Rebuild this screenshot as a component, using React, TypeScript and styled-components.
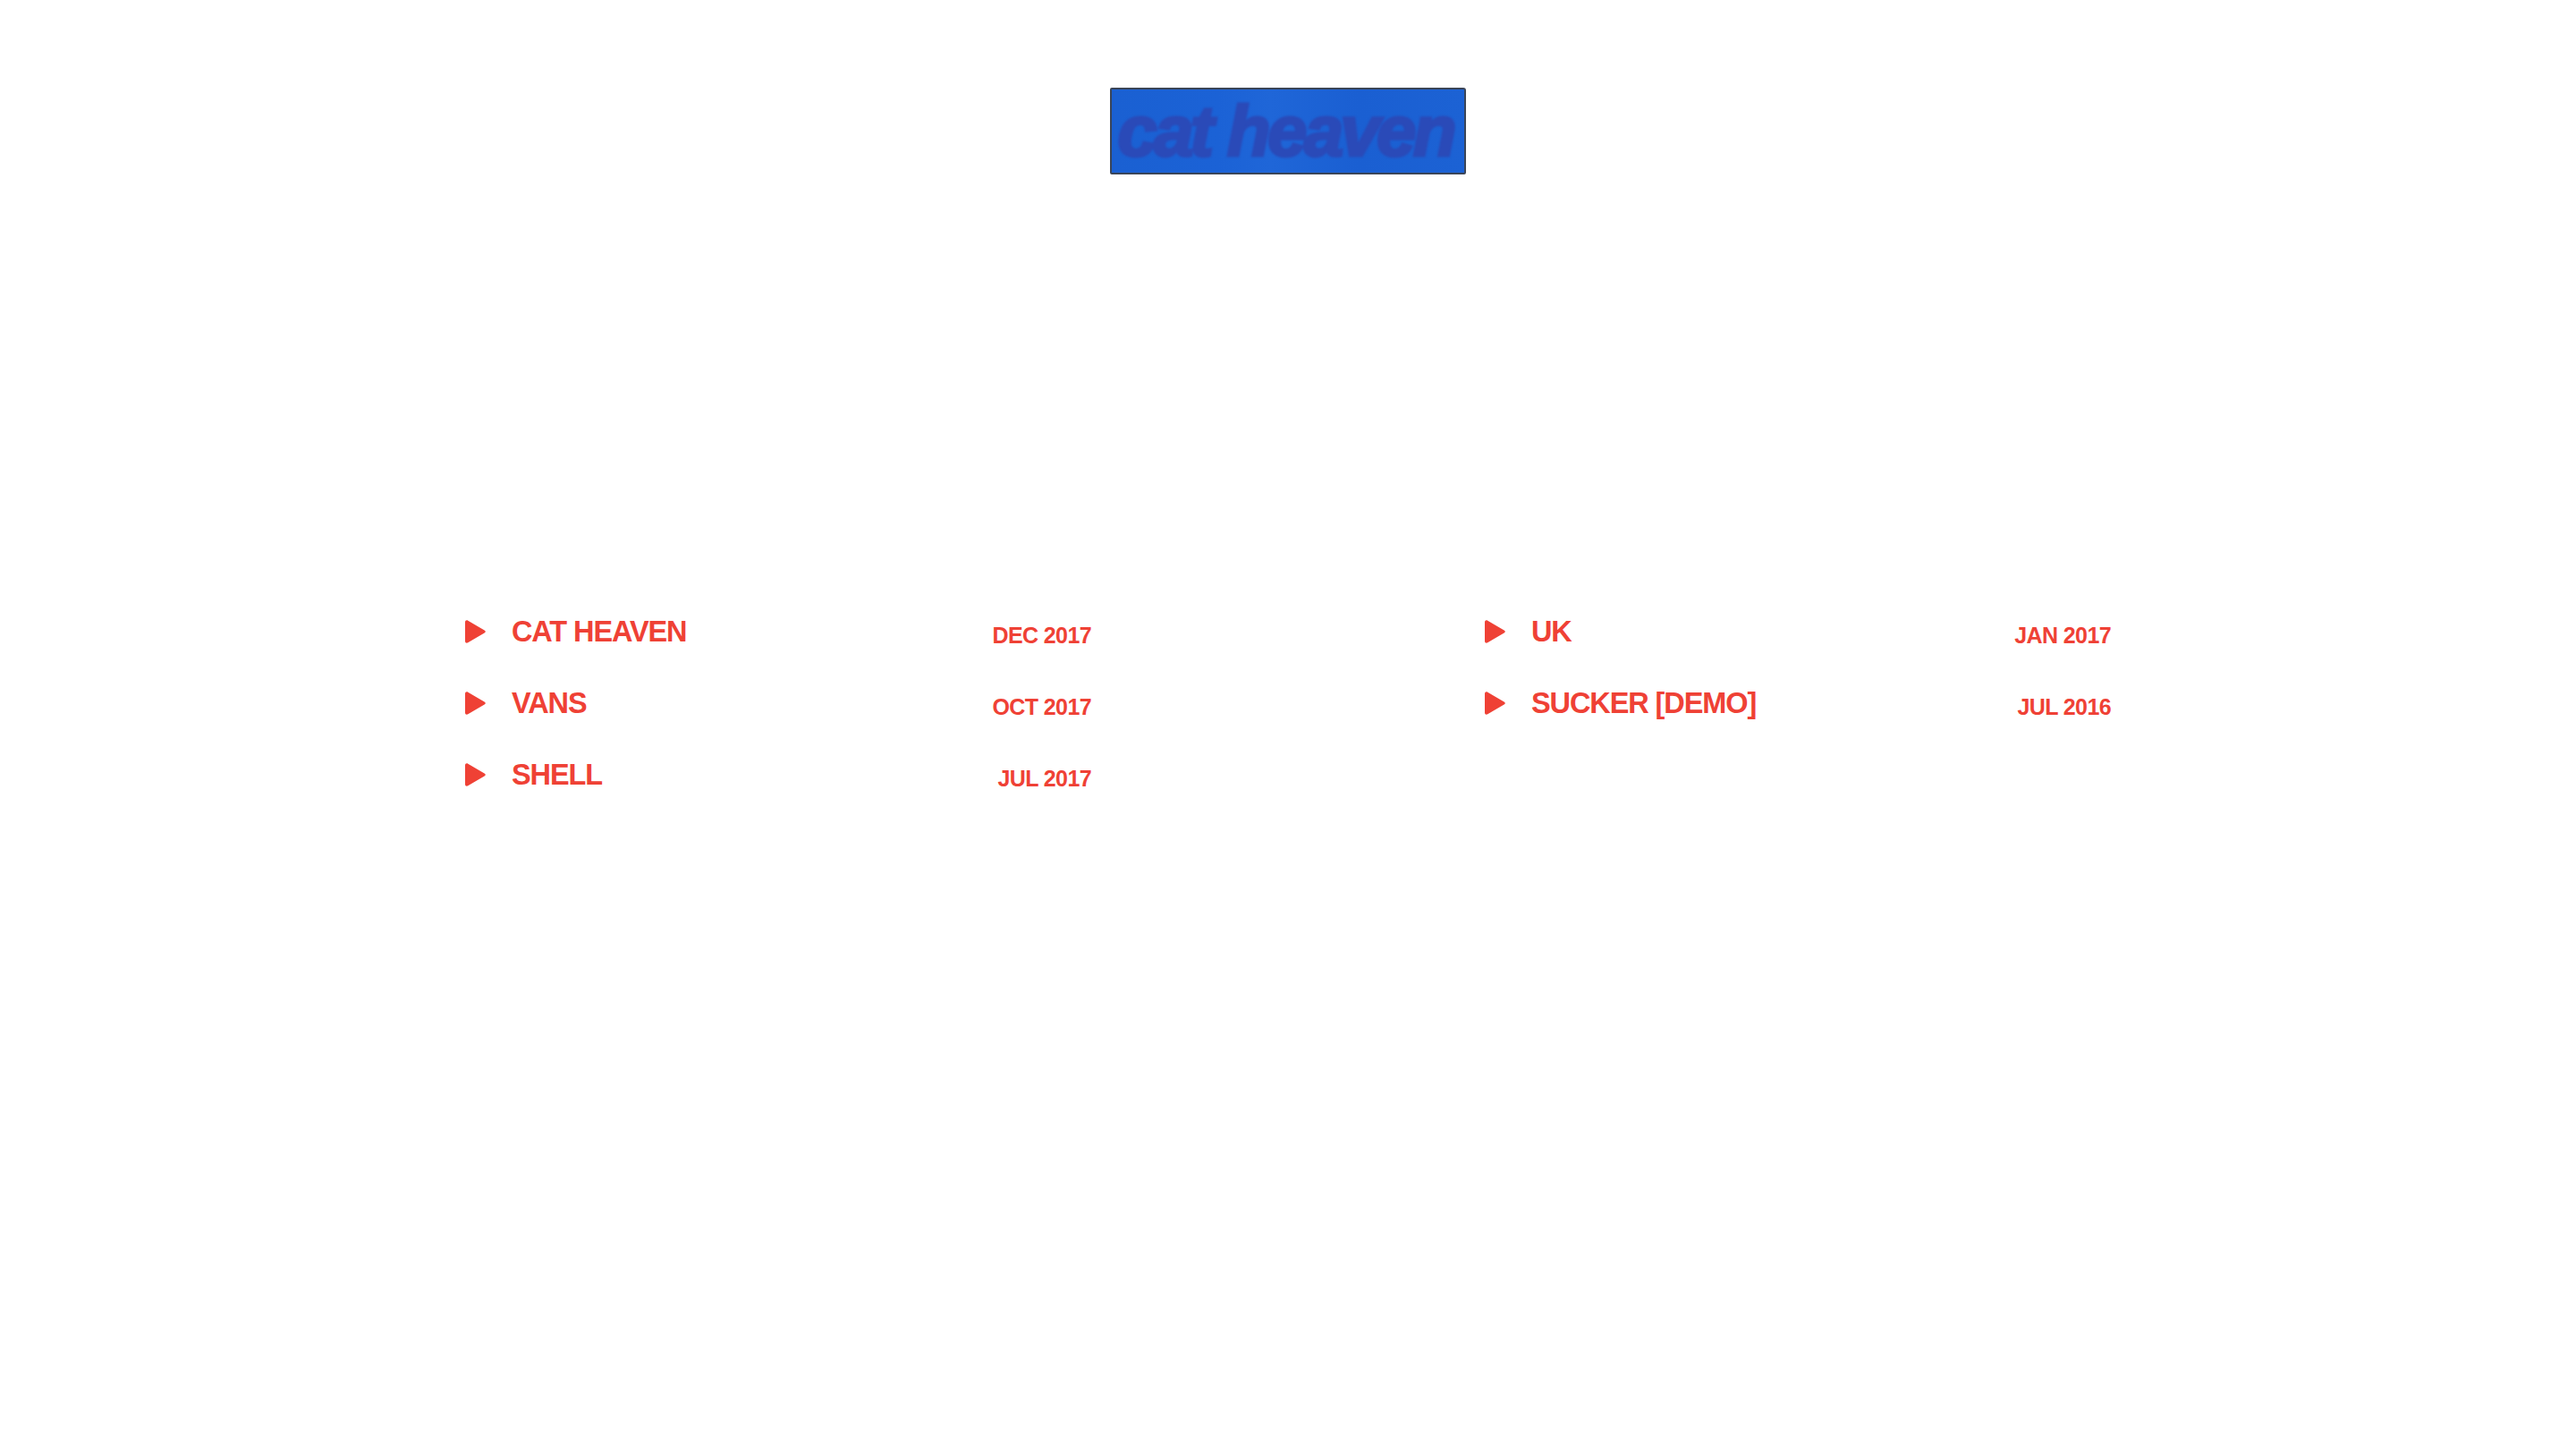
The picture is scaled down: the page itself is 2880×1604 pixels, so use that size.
import React from "react";
import styled, { createGlobalStyle } from "styled-components";

const GlobalStyle = createGlobalStyle`
  html, body {
    margin: 0;
    background: #fff;
  }
`;

const Page = styled.div`
  width: 2880px;
  height: 1604px;
  overflow: hidden;
  padding-top: 98px;
  box-sizing: border-box;
  display: flex;
  flex-direction: column;
  align-items: center;
  font-family: "Liberation Sans", Arial, sans-serif;
`;

const Patch = styled.div`
  width: 398px;
  height: 97px;
  box-sizing: border-box;
  border: 2px solid #3a4558;
  border-radius: 2px 3px 2px 2px;
  background: linear-gradient(90deg, #1a60d2 0%, #1b62d6 30%, #1f66d8 45%, #1a5fd2 70%, #1c62d4 100%);
  display: flex;
  align-items: center;
  justify-content: center;
  overflow: hidden;
`;

const PatchText = styled.span`
  font-size: 80px;
  line-height: 1;
  font-weight: 700;
  font-style: italic;
  letter-spacing: -3.8px;
  color: #2a4ab8;
  position: relative;
  left: -3px;
  -webkit-text-stroke: 3px #2a4ab8;
  filter: blur(0.8px);
`;

const Tracks = styled.div`
  margin-top: 470px;
  width: 1840px;
  display: grid;
  grid-template-columns: 700px 700px;
  column-gap: 440px;
  align-items: start;
`;

const Column = styled.ul`
  list-style: none;
  margin: 0;
  padding: 0;
  display: flex;
  flex-direction: column;
`;

const Row = styled.li`
  height: 80px;
  display: flex;
  align-items: center;
  color: #ef4135;
`;

const PlayIcon = styled.svg`
  width: 24px;
  height: 26px;
  flex: none;
  margin: 1px 28px 0 0;
  fill: currentColor;
`;

const Title = styled.span`
  flex: 1;
  margin-top: 2px;
  font-size: 32.5px;
  line-height: 40px;
  font-weight: 700;
  letter-spacing: -1.1px;
`;

const Date = styled.span`
  font-size: 25px;
  line-height: 40px;
  font-weight: 700;
  letter-spacing: -0.6px;
  position: relative;
  top: 5px;
`;

type Track = { title: string; date: string };

const left: Track[] = [
  { title: "CAT HEAVEN", date: "DEC 2017" },
  { title: "VANS", date: "OCT 2017" },
  { title: "SHELL", date: "JUL 2017" },
];

const right: Track[] = [
  { title: "UK", date: "JAN 2017" },
  { title: "SUCKER [DEMO]", date: "JUL 2016" },
];

const TrackList = ({ tracks }: { tracks: Track[] }) => (
  <Column>
    {tracks.map((track) => (
      <Row key={track.title}>
        <PlayIcon viewBox="0 0 24 26">
          <path d="M0 2.6C0 .6 1.6-.2 3.2.7L21.6 11.4c1.6.9 1.6 2.3 0 3.2L3.2 25.3C1.6 26.2 0 25.4 0 23.4Z" />
        </PlayIcon>
        <Title>{track.title}</Title>
        <Date>{track.date}</Date>
      </Row>
    ))}
  </Column>
);

const App = () => {
  return (
    <>
      <GlobalStyle />
      <Page>
        <Patch>
          <PatchText>cat heaven</PatchText>
        </Patch>
        <Tracks>
          <TrackList tracks={left} />
          <TrackList tracks={right} />
        </Tracks>
      </Page>
    </>
  );
};

export default App;
